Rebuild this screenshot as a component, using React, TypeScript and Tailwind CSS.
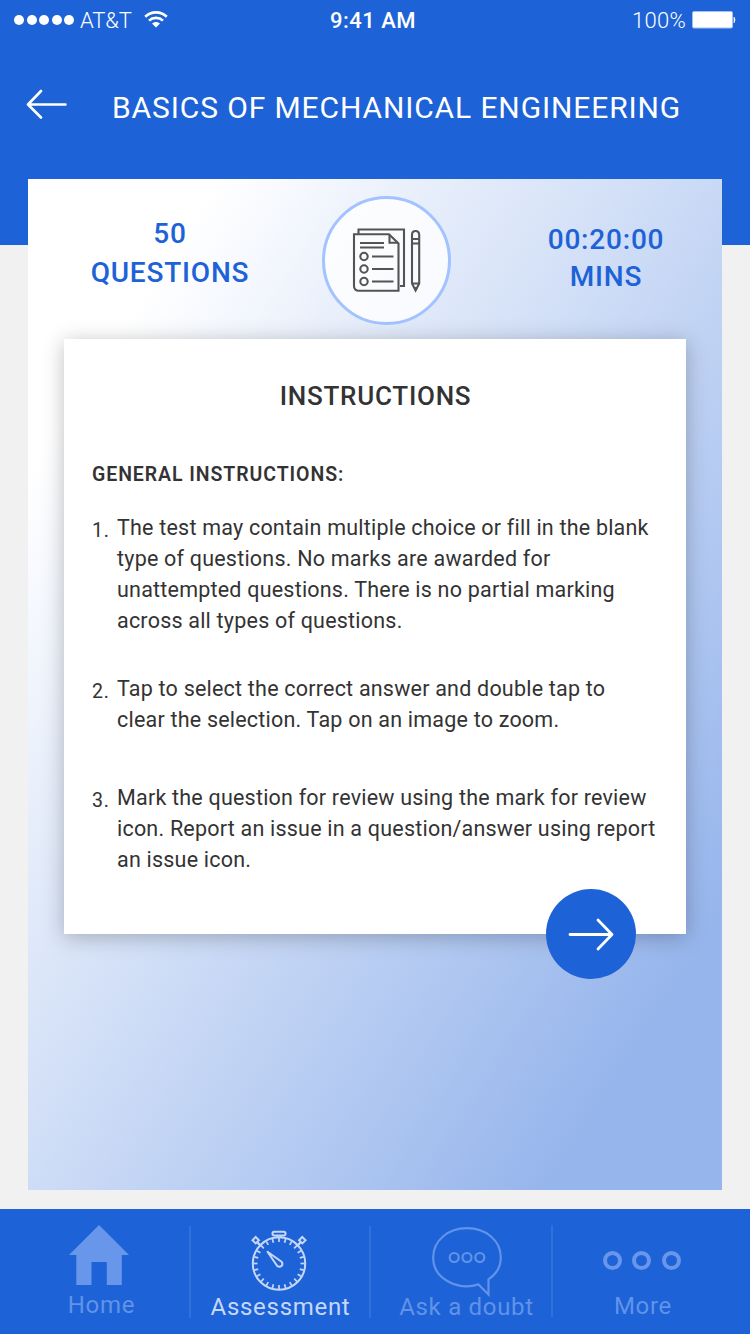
import React from "react";

const INSTRUCTIONS: { lines: string[]; gap: string }[] = [
  {
    lines: [
      "The test may contain multiple choice or fill in the blank",
      "type of questions. No marks are awarded for",
      "unattempted questions. There is no partial marking",
      "across all types of questions.",
    ],
    gap: "mb-[37px]",
  },
  {
    lines: [
      "Tap to select the correct answer and double tap to",
      "clear the selection. Tap on an image to zoom.",
    ],
    gap: "mb-[47px]",
  },
  {
    lines: [
      "Mark the question for review using the mark for review",
      "icon. Report an issue in a question/answer using report",
      "an issue icon.",
    ],
    gap: "",
  },
];

function StatusBar() {
  return (
    <div className="relative flex h-10 items-center justify-between pl-[14px] pr-[14px] text-[22px]">
      <div className="flex items-center">
        <div className="flex gap-[2.5px]">
          {[0, 1, 2, 3, 4].map((i) => (
            <span key={i} className="size-[10px] rounded-full bg-white" />
          ))}
        </div>
        <span className="ml-[6px] text-[22px] font-light tracking-[-0.1px]">AT&amp;T</span>
        <svg className="mb-[2px] ml-3" width="24" height="18" viewBox="0 0 24 18" fill="none" stroke="#fff">
          <path d="M1.2 6.8C7.2 .9 16.8 .9 22.8 6.8" strokeWidth="2.6" />
          <path d="M5 10.6C9 6.9 15 6.9 19 10.6" strokeWidth="2.6" />
          <path d="M8 13.6C10.3 11.4 13.7 11.4 16 13.6L12 17.5Z" fill="#fff" stroke="none" />
        </svg>
      </div>
      <span className="absolute left-[330px] top-[5px] font-medium leading-8 tracking-[0.5px]">9:41 AM</span>
      <div className="flex items-center">
        <span className="font-light tracking-[0.3px]">100%</span>
        <svg className="ml-[6px]" width="44" height="18" viewBox="0 0 44 18">
          <rect x="0.5" y="0.5" width="40" height="16.5" rx="1.5" fill="#fff" stroke="#a4c0f0" />
          <path d="M42 6Q44 8.8 42 11.8Z" fill="#fff" stroke="#fff" strokeWidth=".6" />
        </svg>
      </div>
    </div>
  );
}

function ChecklistIcon() {
  return (
    <svg width="123" height="123" viewBox="0 0 123 123" fill="none" stroke="#545454" strokeWidth="2.1">
      <path d="M33.5 35V30.5H79V87H75" />
      <path d="M29 35.2H64L73.5 44.5V91.8H34Q29 91.8 29 86.8Z" />
      <path d="M64.5 35.5V43.8H73" />
      <path d="M35 44H59M35 48.5H59" />
      <path d="M47 57.5H68.5M47 70H68.5M47 82.5H68.5" />
      <circle cx="39" cy="57.5" r="3.7" />
      <circle cx="39" cy="70" r="3.7" />
      <circle cx="39" cy="82.5" r="3.7" />
      <path d="M87 84.5V36Q87 32 90.5 32Q94.2 32 94.2 36V84.5L90.6 91.5ZM87 84.5H94.2M87 40H94.2M87 44.5H94.2" />
      <path d="M88.8 88.5H92.4L90.6 92Z" fill="#545454" strokeWidth="1" />
    </svg>
  );
}

function HomeIcon() {
  return (
    <svg className="-ml-[2px]" width="60" height="60" viewBox="0 0 60 60" fill="#6896ea">
      <path d="M30 0L60 30H52.8V60H37.8V37H22.5V60H7.3V30H0Z" />
    </svg>
  );
}

function StopwatchIcon() {
  const ticks = Array.from({ length: 24 }, (_, i) => i * 15);
  return (
    <svg className="-ml-[3px]" width="58" height="62" viewBox="0 0 58 62" fill="none" stroke="#c6d8f8" strokeWidth="2">
      <circle cx="29" cy="33.5" r="26.2" />
      {ticks.map((a) => (
        <path key={a} d="M29 8V12" strokeWidth="1.7" transform={`rotate(${a} 29 33.5)`} />
      ))}
      <rect x="22.5" y="1.8" width="13" height="3.6" rx="1.6" />
      <path d="M27 5.5V8M31 5.5V8" strokeWidth="1.6" />
      <path d="M5.4 7.4L8.6 10.6L5.4 13.8L2.2 10.6Z" transform="translate(.3 -.4)" />
      <path d="M52.6 7.4L55.8 10.6L52.6 13.8L49.4 10.6Z" transform="translate(-.3 -.4)" />
      <path d="M7.5 12.5L11 16M50.5 12.5L47 16" strokeWidth="2.4" />
      <path d="M17.5 21.8L31.6 31.8Q33.2 33.8 31.8 35.8Q29.6 37.6 27.4 36.2Z" strokeLinejoin="round" />
    </svg>
  );
}

function ChatIcon() {
  return (
    <svg width="70" height="70" viewBox="0 0 70 70" fill="none" stroke="#6093e9" strokeWidth="2.2">
      <path d="M46.5 57.4C27 63.5 1.2 53 1.2 30.5C1.2 13.5 16 1.2 35 1.2S68.8 13.5 68.8 30.5C68.8 40 64.5 47 56.5 52.3V67.5Z" />
      <circle cx="22.2" cy="30.5" r="4.5" />
      <circle cx="35" cy="30.5" r="4.5" />
      <circle cx="47.8" cy="30.5" r="4.5" />
    </svg>
  );
}

function BottomNav() {
  return (
    <nav className="flex h-[125px] bg-[#1d62d6] text-[24px] leading-7 text-[#6093e9]">
      <div className="flex w-[189px] flex-col items-center pl-[10px] pt-4">
        <HomeIcon />
        <span className="mt-[6px] pl-1 tracking-[0.7px]">Home</span>
      </div>
      <div className="mt-[17px] h-[92px] w-[2px] bg-[#3071da]" />
      <div className="flex w-[178px] flex-col items-center pt-[21px] text-[#c6d8f8]">
        <StopwatchIcon />
        <span className="mt-px pl-[1px] tracking-[0.7px]">Assessment</span>
      </div>
      <div className="mt-[17px] h-[92px] w-[2px] bg-[#3071da]" />
      <div className="flex w-[180px] flex-col items-center pl-[12px] pt-[18px]">
        <ChatIcon />
        <span className="-mt-1 pr-px tracking-[0.7px]">Ask a doubt</span>
      </div>
      <div className="mt-4 h-[92px] w-[2px] bg-[#3071da]" />
      <div className="flex flex-1 flex-col items-center pt-[42px]">
        <div className="flex gap-[10.5px] pr-5">
          {[0, 1, 2].map((i) => (
            <span key={i} className="size-[19px] rounded-full border-4 border-[#6896ea]" />
          ))}
        </div>
        <span className="mt-[22px] pr-[17px] tracking-[0.7px]">More</span>
      </div>
    </nav>
  );
}

export default function App() {
  return (
    <div className="flex h-[1334px] w-[750px] flex-col overflow-hidden bg-[#f1f1f1] font-['Roboto',sans-serif]">
      <header className="h-[245px] shrink-0 bg-[#1d62d6] text-white">
        <StatusBar />
        <div className="flex items-center pl-[26px] pt-[49px]">
          <svg className="mb-[8px]" width="42" height="30" viewBox="0 0 42 30" fill="none" stroke="#fff" strokeWidth="2.6" strokeLinecap="round" strokeLinejoin="round">
            <path d="M15 2L2 15.5L15 28.5M2 15.5H39.5" />
          </svg>
          <h1 className="ml-[44px] whitespace-nowrap text-[30px] leading-[38px] tracking-[0.88px]">
            BASICS OF MECHANICAL ENGINEERING
          </h1>
        </div>
      </header>

      <main className="relative mx-7 -mt-[66px] mb-[19px] flex h-[1011px] shrink-0 flex-col bg-[linear-gradient(122.5deg,#ffffff_14%,#96b5ec_87%)] px-9">
        <div className="flex h-40 text-center text-[28px] font-medium tracking-[0.8px] text-[#1d62d6]">
          <div className="ml-[26px] w-[160px] pt-[35px] leading-[39px]">
            50
            <br />
            QUESTIONS
          </div>
          <div className="ml-[72px] mt-[17px] size-[129px] shrink-0 rounded-full border-[3px] border-[#a2c3ff] bg-white/80">
            <ChecklistIcon />
          </div>
          <div className="ml-[95px] w-[120px] pt-[42px] leading-[37px]">
            00:20:00
            <br />
            MINS
          </div>
        </div>

        <section className="relative h-[595px] bg-white px-7 text-[#333333] shadow-[0_3px_20px_rgba(0,0,0,0.25)]">
          <h2 className="pl-px pt-[41px] text-center text-[26px] font-medium leading-8 tracking-[0.75px]">INSTRUCTIONS</h2>
          <h3 className="mt-[51px] text-[19.5px] font-semibold leading-6 tracking-[0.92px]">GENERAL INSTRUCTIONS:</h3>
          <ol className="mt-[25px] text-[21.5px] leading-[31px] tracking-[0.21px]">
            {INSTRUCTIONS.map((item, i) => (
              <li key={i} className={`flex ${item.gap}`}>
                <span className="w-[25px] shrink-0 pt-[3px] text-[19.6px] tracking-[0.6px]">{i + 1}.</span>
                <p className="whitespace-nowrap">
                  {item.lines.map((line) => (
                    <span key={line} className="block">
                      {line}
                    </span>
                  ))}
                </p>
              </li>
            ))}
          </ol>
          <button className="absolute -bottom-[45px] right-[50px] flex size-[90px] items-center justify-center rounded-full bg-[#1d62d6]">
            <svg width="46" height="34" viewBox="0 0 46 34" fill="none" stroke="#fff" strokeWidth="2.8" strokeLinecap="round" strokeLinejoin="round">
              <path d="M30 3L44 17.5L30 32M2 17.5H44" />
            </svg>
          </button>
        </section>
      </main>

      <BottomNav />
    </div>
  );
}
